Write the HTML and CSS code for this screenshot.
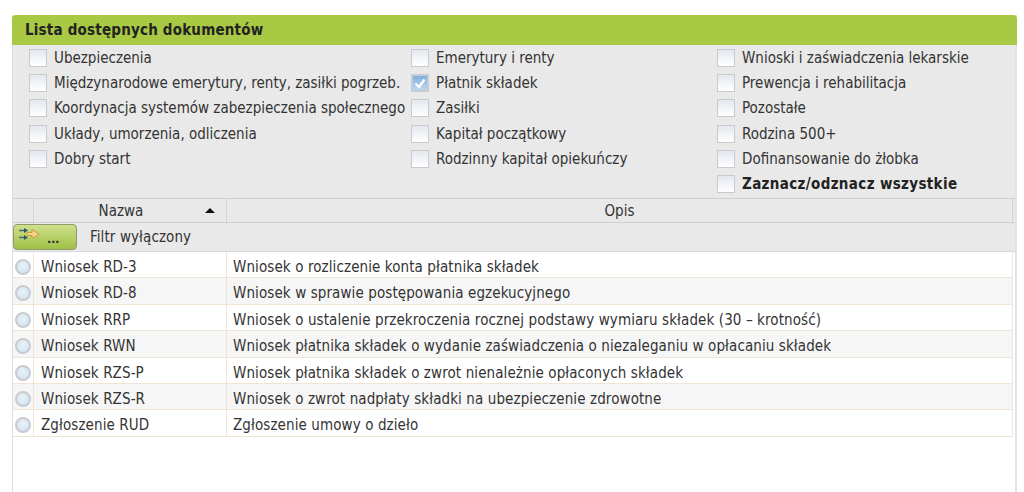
FILE: index.html
```html
<!DOCTYPE html>
<html lang="pl">
<head>
<meta charset="utf-8">
<title>Lista dostępnych dokumentów</title>
<link rel="stylesheet" href="styles.css">
</head>
<body>
<main class="panel">
  <h1 class="title">Lista dostępnych dokumentów</h1>
  <section class="options">
    <label class="opt"><span class="cb"></span>Ubezpieczenia</label>
    <label class="opt"><span class="cb"></span>Emerytury i renty</label>
    <label class="opt"><span class="cb"></span>Wnioski i zaświadczenia lekarskie</label>
    <label class="opt"><span class="cb"></span>Międzynarodowe emerytury, renty, zasiłki pogrzeb.</label>
    <label class="opt"><span class="cb checked"><svg viewBox="0 0 14 14" width="14" height="14"><path d="M2.5 7.5 L6 11 L11.5 3.5" fill="none" stroke="#fff" stroke-width="2.4"/></svg></span>Płatnik składek</label>
    <label class="opt"><span class="cb"></span>Prewencja i rehabilitacja</label>
    <label class="opt"><span class="cb"></span>Koordynacja systemów zabezpieczenia społecznego</label>
    <label class="opt"><span class="cb"></span>Zasiłki</label>
    <label class="opt"><span class="cb"></span>Pozostałe</label>
    <label class="opt"><span class="cb"></span>Układy, umorzenia, odliczenia</label>
    <label class="opt"><span class="cb"></span>Kapitał początkowy</label>
    <label class="opt"><span class="cb"></span>Rodzina 500+</label>
    <label class="opt"><span class="cb"></span>Dobry start</label>
    <label class="opt"><span class="cb"></span>Rodzinny kapitał opiekuńczy</label>
    <label class="opt"><span class="cb"></span>Dofinansowanie do żłobka</label>
    <span></span>
    <span></span>
    <label class="opt all"><span class="cb"></span>Zaznacz/odznacz wszystkie</label>
  </section>
  <div class="thead">
    <div class="c-radio"></div>
    <div class="c-name">Nazwa<span class="sort"></span></div>
    <div class="c-desc">Opis</div>
  </div>
  <div class="filter">
    <button class="fbtn" type="button">
      <svg class="ficon" viewBox="0 0 22 14" width="22" height="14">
        <path d="M0 3.5H7M0 10.5H7" stroke="#4d6a7a" stroke-width="1.6"/>
        <path d="M5 1L9 3.5L5 6ZM5 8L9 10.5L5 13Z" fill="#33566e"/>
        <path d="M8 5.5H13V2.5L20 7L13 11.5V8.5H8Z" fill="#f4d58a" stroke="#d39a3c" stroke-width="1"/>
      </svg>
      <span class="dots">...</span>
    </button>
    <span class="ftext">Filtr wyłączony</span>
  </div>
  <div class="rows">
    <div class="row"><div class="c-radio"><span class="radio"></span></div><div class="c-name">Wniosek RD-3</div><div class="c-desc">Wniosek o rozliczenie konta płatnika składek</div></div>
    <div class="row alt"><div class="c-radio"><span class="radio"></span></div><div class="c-name">Wniosek RD-8</div><div class="c-desc">Wniosek w sprawie postępowania egzekucyjnego</div></div>
    <div class="row"><div class="c-radio"><span class="radio"></span></div><div class="c-name">Wniosek RRP</div><div class="c-desc">Wniosek o ustalenie przekroczenia rocznej podstawy wymiaru składek (30 – krotność)</div></div>
    <div class="row alt"><div class="c-radio"><span class="radio"></span></div><div class="c-name">Wniosek RWN</div><div class="c-desc">Wniosek płatnika składek o wydanie zaświadczenia o niezaleganiu w opłacaniu składek</div></div>
    <div class="row"><div class="c-radio"><span class="radio"></span></div><div class="c-name">Wniosek RZS-P</div><div class="c-desc">Wniosek płatnika składek o zwrot nienależnie opłaconych składek</div></div>
    <div class="row alt"><div class="c-radio"><span class="radio"></span></div><div class="c-name">Wniosek RZS-R</div><div class="c-desc">Wniosek o zwrot nadpłaty składki na ubezpieczenie zdrowotne</div></div>
    <div class="row"><div class="c-radio"><span class="radio"></span></div><div class="c-name">Zgłoszenie RUD</div><div class="c-desc">Zgłoszenie umowy o dzieło</div></div>
  </div>
</main>
</body>
</html>
```

FILE: styles.css
```css
html, body { margin: 0; height: 100%; overflow: hidden; background: #fff; }
body {
  padding: 15px 7px 0 12px;
  box-sizing: border-box;
  font-family: "DejaVu Sans Condensed", "DejaVu Sans", sans-serif;
  font-size: 15px;
  color: #333;
}
.panel {
  height: 477px;
  border-left: 1px solid #dedede;
  border-right: 2px solid #e2e2e2;
  box-sizing: border-box;
}
.title {
  margin: 0 -2px 0 -1px;
  height: 30px;
  line-height: 30px;
  padding-left: 13px;
  background: #a9c843;
  border-radius: 4px 4px 0 0;
  font-size: 15px;
  font-weight: bold;
  color: #222;
  letter-spacing: .2px;
}
.options {
  height: 153px;
  box-sizing: border-box;
  background: #e9e9e9;
  padding: 0 0 0 16px;
  display: grid;
  grid-template-columns: 382px 306px 1fr;
  grid-auto-rows: 25.3px;
}
.opt { display: flex; align-items: center; gap: 7px; white-space: nowrap; }
.all { font-weight: bold; color: #222; letter-spacing: .35px; }
.cb {
  width: 18px; height: 18px; flex: none;
  box-sizing: border-box;
  border: 1px solid #c9c9cf;
  background: linear-gradient(#e3e8ef, #fff);
  display: block;
}
.checked {
  border: 2px solid #c3ccd6;
  background: linear-gradient(#7fb0dc, #bcd8ee);
}
.checked svg { display: block; }
.thead {
  display: grid;
  grid-template-columns: 20px 193px 1fr;
  height: 25px;
  line-height: 25px;
  box-sizing: border-box;
  background: #e9e9e9;
  border-top: 1px solid #cfcfcf;
  border-bottom: 1px solid #cfcfcf;
  text-align: center;
}
.thead .c-name, .thead .c-desc { border-left: 1px solid #d4d4d4; }
.thead .c-desc { border-right: 1px solid #d4d4d4; margin-right: 2px; }
.thead .c-name { position: relative; padding-right: 18px; }
.sort {
  position: absolute; right: 11px; top: 9px;
  border-left: 5px solid transparent;
  border-right: 5px solid transparent;
  border-bottom: 5px solid #111;
}
.filter {
  display: flex; align-items: center;
  height: 29px;
  box-sizing: border-box;
  background: #e9e9e9;
  padding-left: 0;
  border-bottom: 1px solid #d9d9d9;
}
.fbtn {
  position: relative;
  width: 64px; height: 26px;
  padding: 0;
  border: 1px solid #8f9a70;
  border-radius: 4px;
  background: linear-gradient(#cfe08c, #9fc046);
}
.ficon { position: absolute; left: 5px; top: 2px; }
.dots { position: absolute; left: 33px; top: 4px; font-weight: bold; font-size: 15px; color: #333; }
.ftext { margin-left: 13px; letter-spacing: .1px; }
.rows { background: #fff; letter-spacing: .1px; }
.row {
  display: grid;
  grid-template-columns: 20px 193px 1fr;
  height: 26.4px;
  line-height: 24px;
  box-sizing: border-box;
  margin-right: 2px;
  border-right: 1px solid #f0e4d6;
  border-bottom: 1px solid #f0e4d6;
}
.alt { background: #f6f6f6; }
.row .c-name, .row .c-desc { border-left: 1px solid #f0e4d6; padding: 3px 0 0 6px; white-space: nowrap; }
.row .c-name { padding-left: 7px; }
.row .c-radio { display: flex; align-items: center; justify-content: center; padding-top: 3px; }
.radio {
  width: 16px; height: 16px;
  box-sizing: border-box;
  border-radius: 50%;
  border: 2px solid #c8cbd0;
  background: radial-gradient(circle at 50% 40%, #eaf2f8, #cfe0ee);
}
```
